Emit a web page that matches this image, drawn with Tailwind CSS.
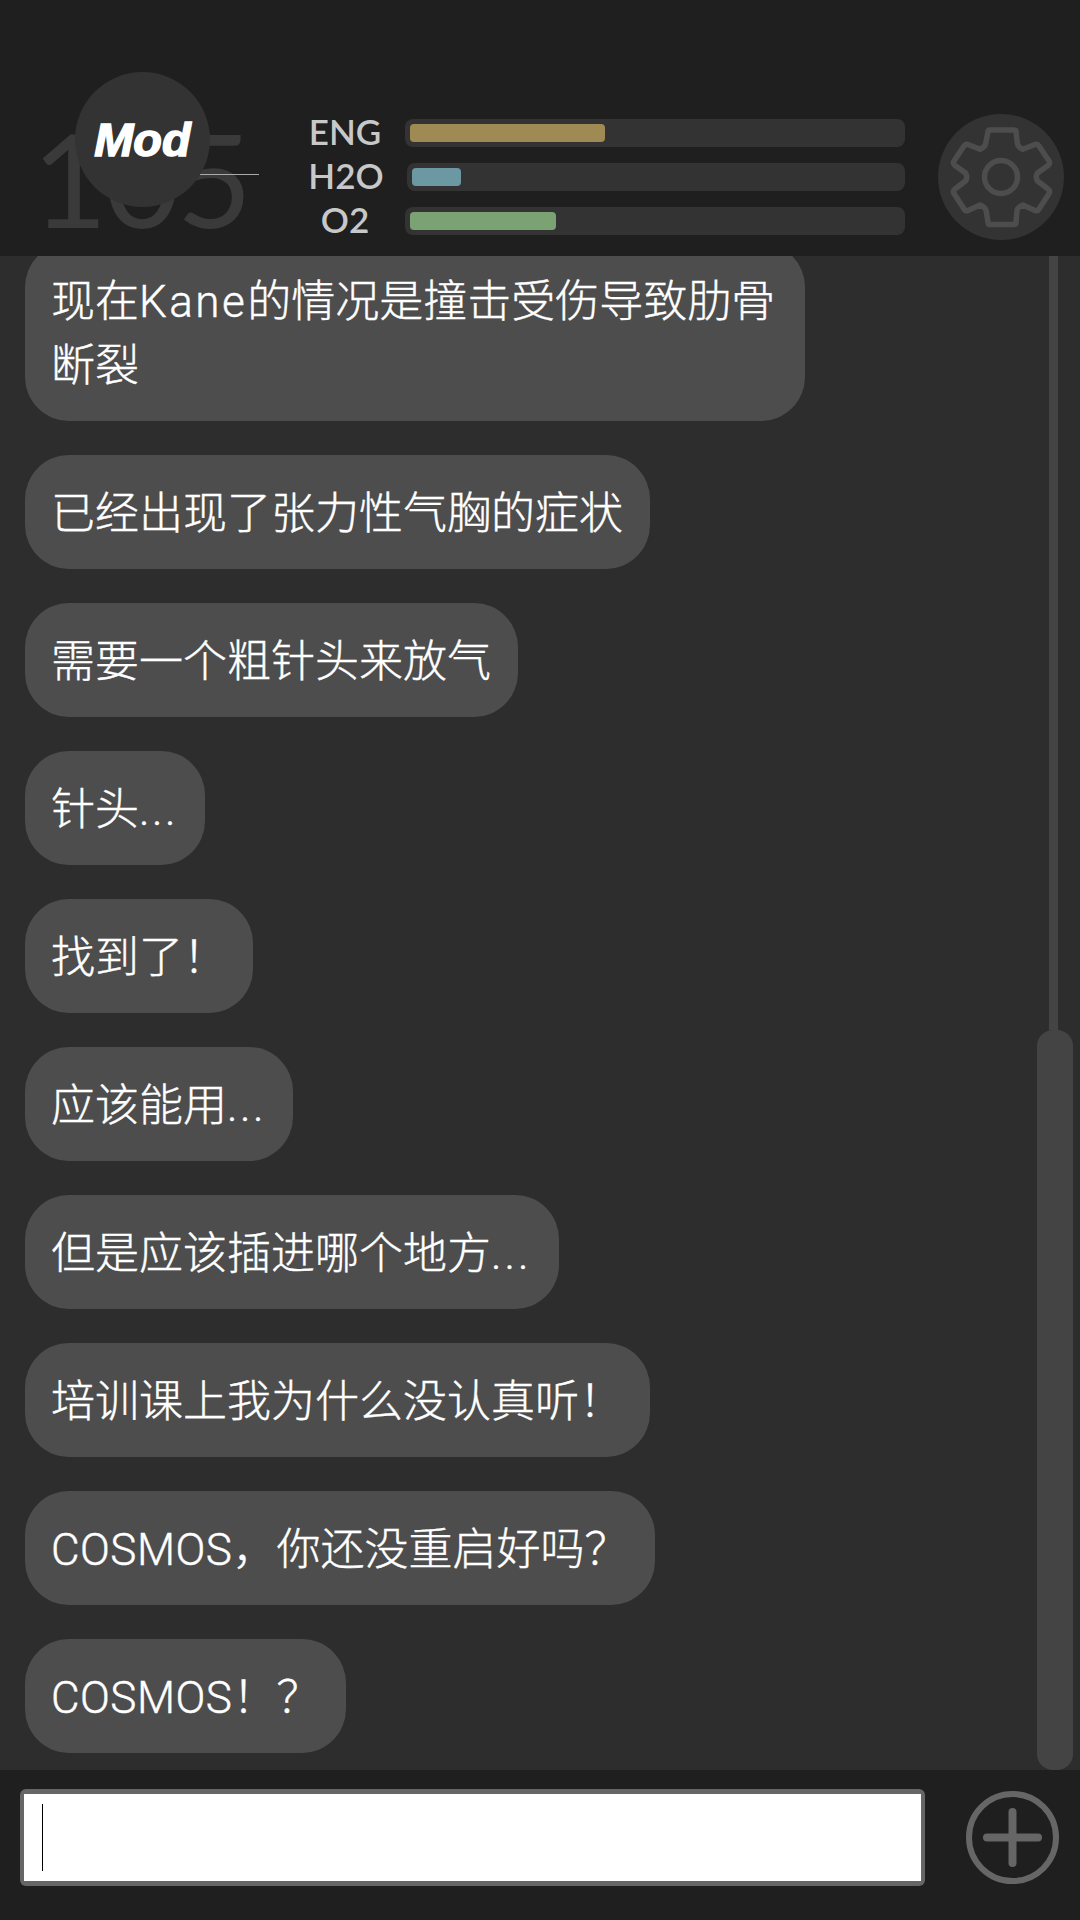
<!DOCTYPE html>
<html lang="zh">
<head>
    <meta charset="UTF-8">
    <title>Chat</title>
    <script src="https://cdn.jsdelivr.net/npm/@tailwindcss/browser@4"></script>
</head>
<body class="bg-[#2d2d2d] font-['Roboto','Noto_Sans_CJK_SC',sans-serif]">
<div class="w-[1080px] h-[1920px] flex flex-col overflow-hidden">

    <!-- header -->
    <header class="relative z-10 h-[256px] shrink-0 bg-[#1f1f1f] flex items-start">
        <div class="relative w-[305px] h-full shrink-0">
            <div class="absolute left-[32px] top-[103px] text-[130px] leading-[150px] tracking-[-3px] text-[#3a3a3a] font-['Lato',sans-serif]">105</div>
            <div class="absolute left-[200px] top-[174px] w-[59px] h-px bg-[#aaaaaa]"></div>
            <div class="absolute left-[75px] top-[72px] w-[135px] h-[135px] rounded-full bg-[#333333] flex items-center justify-center">
                <span class="text-[47px] leading-none font-bold italic text-white font-['Liberation_Sans',sans-serif] [-webkit-text-stroke:1.5px_white]">Mod</span>
            </div>
        </div>

        <div class="mt-[119px] w-[600px] grid gap-y-[16px]">
            <div class="flex items-center h-[28px]">
                <span class="w-[100px] pr-[20px] -mt-[3px] text-center text-[35px] font-semibold text-[#c8c8c8] font-['Lato',sans-serif]">ENG</span>
                <div class="w-[500px] h-[28px] p-[5px] rounded-[8px] bg-[#333333]">
                    <div class="w-[195px] h-[18px] rounded-[4px] bg-[#9e8a52]"></div>
                </div>
            </div>
            <div class="flex items-center h-[28px]">
                <span class="w-[100px] pr-[18px] -mt-[3px] text-center text-[35px] font-semibold text-[#c8c8c8] font-['Lato',sans-serif]">H2O</span>
                <div class="w-[498px] ml-[2px] h-[28px] p-[5px] rounded-[8px] bg-[#333333]">
                    <div class="w-[49px] h-[18px] rounded-[4px] bg-[#6b98a3]"></div>
                </div>
            </div>
            <div class="flex items-center h-[28px]">
                <span class="w-[100px] pr-[20px] -mt-[3px] text-center text-[35px] font-semibold text-[#c8c8c8] font-['Lato',sans-serif]">O2</span>
                <div class="w-[500px] h-[28px] p-[5px] rounded-[8px] bg-[#333333]">
                    <div class="w-[146px] h-[18px] rounded-[4px] bg-[#7aa272]"></div>
                </div>
            </div>
        </div>

        <div class="ml-[33px] mt-[114px] w-[126px] h-[126px] rounded-full bg-[#333333]">
            <svg width="126" height="126" viewBox="0 0 126 126" fill="none" stroke="#4d4d4d" stroke-width="5.500" stroke-linejoin="round">
                <path d="M50 18 Q50 16 52 16 L76 16 Q78 16 78 18 L79.500 30 Q80 33 84.800 35.300 L97 30.500 Q99.500 29.800 101 32 L111 47 Q112.500 49.500 110 51.500 L99.500 59 Q97 63 99.500 67 L110 75 Q112.500 77 111 79.500 L101 95 Q99.500 97.500 97 96.500 L84.800 91 Q80 93 79 96 L78 108 Q78 110.500 76 110.500 L52 110.500 Q50 110.500 50 108 L48 96 Q47 93 42 91 L30 96.500 Q27.500 97.500 26 95 L16 79.500 Q14.500 77 17 75 L27.500 67 Q30 63 27.500 59 L17 51.500 Q14.500 49.500 16 47 L26 32 Q27.500 29.800 30 30.500 L42 35.300 Q47 33 47.500 30 Z"/>
                <circle cx="63" cy="63" r="16.500"/>
            </svg>
        </div>
    </header>

    <!-- messages -->
    <main class="relative flex-1 overflow-hidden">
        <div class="-mt-[13px] pl-[25px] flex flex-col items-start gap-y-[34px] text-[44px] leading-[64px] font-light text-white [-webkit-text-stroke:0.4px_white]">
            <div class="w-fit max-w-[780px] pl-[26px] pr-[27px] pt-[27px] pb-[23px] rounded-[44px] bg-[#4d4d4d]">现在<span class="tracking-[2.500px]">Kane</span>的情况是撞击受伤导致肋骨断裂</div>
            <div class="w-fit max-w-[780px] pl-[26px] pr-[27px] pt-[27px] pb-[23px] rounded-[44px] bg-[#4d4d4d]">已经出现了张力性气胸的症状</div>
            <div class="w-fit max-w-[780px] pl-[26px] pr-[27px] pt-[27px] pb-[23px] rounded-[44px] bg-[#4d4d4d]">需要一个粗针头来放气</div>
            <div class="w-fit max-w-[780px] pl-[26px] pr-[27px] pt-[27px] pb-[23px] rounded-[44px] bg-[#4d4d4d]">针头<span class="tracking-[2.500px]">...</span></div>
            <div class="w-fit max-w-[780px] pl-[26px] pr-[26px] pt-[27px] pb-[23px] rounded-[44px] bg-[#4d4d4d]">找到了！</div>
            <div class="w-fit max-w-[780px] pl-[26px] pr-[27px] pt-[27px] pb-[23px] rounded-[44px] bg-[#4d4d4d]">应该能用<span class="tracking-[2.500px]">...</span></div>
            <div class="w-fit max-w-[780px] pl-[26px] pr-[27px] pt-[27px] pb-[23px] rounded-[44px] bg-[#4d4d4d]">但是应该插进哪个地方<span class="tracking-[3px]">...</span></div>
            <div class="w-fit max-w-[780px] pl-[26px] pr-[27px] pt-[27px] pb-[23px] rounded-[44px] bg-[#4d4d4d]">培训课上我为什么没认真听！</div>
            <div class="w-fit max-w-[780px] pl-[26px] pr-[27px] pt-[27px] pb-[23px] rounded-[44px] bg-[#4d4d4d]"><span class="tracking-[0.500px]">COSMOS</span>，你还没重启好吗？</div>
            <div class="w-fit max-w-[780px] pl-[26px] pr-[26px] pt-[27px] pb-[23px] rounded-[44px] bg-[#4d4d4d]"><span class="tracking-[0.500px]">COSMOS</span>！？</div>
        </div>
        <!-- scrollbar -->
        <div class="absolute left-[1049px] top-0 w-[9px] h-[774px] bg-[#444444]"></div>
        <div class="absolute left-[1037px] top-[774px] bottom-0 w-[36px] rounded-[16px] bg-[#444444]"></div>
    </main>

    <!-- input -->
    <footer class="h-[150px] shrink-0 bg-[#1f1f1f] flex items-start pl-[20px] pt-[19px]">
        <div class="w-[905px] h-[97px] rounded-[6px] px-[4px] py-[5px] bg-[#666666]">
            <div class="h-full bg-white pl-[18px] pt-[10px]">
                <div class="w-px h-[67px] bg-black"></div>
            </div>
        </div>
        <svg class="ml-[41px] mt-[2px]" width="93" height="93" viewBox="0 0 93 93" fill="none" stroke="#666666" stroke-linecap="round">
            <circle cx="46.500" cy="46.500" r="43.500" stroke-width="6"/>
            <path d="M21 46.500 H72" stroke-width="8"/>
            <path d="M46.500 21 V72" stroke-width="8"/>
        </svg>
    </footer>
</div>
</body>
</html>
